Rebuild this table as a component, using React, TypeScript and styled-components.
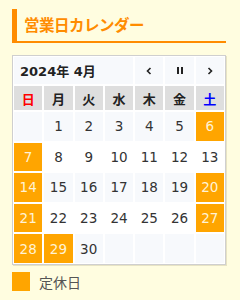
import React from 'react';
import styled, { createGlobalStyle } from 'styled-components';

const GlobalStyle = createGlobalStyle`
  html, body {
    margin: 0;
    padding: 0;
    background: #fffde0;
  }
  body {
    font-family: "DejaVu Sans", "Noto Sans CJK JP", sans-serif;
  }
`;

type DayCell = { day: number | null; closed: boolean };

const YEAR = 2024;
const MONTH = 4;
const CLOSED_DAYS = [6, 7, 14, 20, 21, 27, 28, 29];

const WEEKDAYS = ['日', '月', '火', '水', '木', '金', '土'];

const buildWeeks = (): DayCell[][] => {
  const first = new Date(YEAR, MONTH - 1, 1).getDay();
  const last = new Date(YEAR, MONTH, 0).getDate();
  const cells: DayCell[] = [];
  for (let i = 0; i < first; i++) cells.push({ day: null, closed: false });
  for (let d = 1; d <= last; d++) cells.push({ day: d, closed: CLOSED_DAYS.includes(d) });
  while (cells.length % 7 !== 0) cells.push({ day: null, closed: false });
  const weeks: DayCell[][] = [];
  for (let i = 0; i < cells.length; i += 7) weeks.push(cells.slice(i, i + 7));
  return weeks;
};

const App: React.FC = () => {
  const weeks = buildWeeks();

  return (
    <>
      <GlobalStyle />
      <StyledWidget>
        <StyledTitle>営業日カレンダー</StyledTitle>
        <StyledCalendar>
          <StyledMonth>
            {YEAR}年 {MONTH}月
          </StyledMonth>
          <StyledNav aria-label="prev">
            <svg width="6" height="8" viewBox="0 0 6 8">
              <path d="M4.5 1 L1.5 4 L4.5 7" fill="none" stroke="#222" strokeWidth="1.6" />
            </svg>
          </StyledNav>
          <StyledNav aria-label="today">
            <svg width="6" height="7" viewBox="0 0 6 7">
              <rect x="0" y="0" width="2" height="7" fill="#222" />
              <rect x="4" y="0" width="2" height="7" fill="#222" />
            </svg>
          </StyledNav>
          <StyledNav aria-label="next">
            <svg width="6" height="8" viewBox="0 0 6 8">
              <path d="M1.5 1 L4.5 4 L1.5 7" fill="none" stroke="#222" strokeWidth="1.6" />
            </svg>
          </StyledNav>

          {WEEKDAYS.map((w, i) => (
            <StyledWeekday key={w} $tone={i === 0 ? 'sun' : i === 6 ? 'sat' : 'normal'}>
              {w}
            </StyledWeekday>
          ))}

          {weeks.map((week, wi) =>
            week.map((cell, ci) => (
              <StyledDay key={`${wi}-${ci}`} $closed={cell.closed} $striped={wi % 2 === 0}>
                {cell.day ?? ''}
              </StyledDay>
            ))
          )}
        </StyledCalendar>

        <StyledLegend>
          <StyledSwatch />
          <span>定休日</span>
        </StyledLegend>
      </StyledWidget>
    </>
  );
};

const StyledWidget = styled.div`
  width: 214px;
  padding: 9px 0 0 12px;
`;

const StyledTitle = styled.h2`
  margin: 0;
  height: 34px;
  box-sizing: border-box;
  padding: 3px 0 0 7px;
  border-left: 5px solid #ff8c00;
  border-bottom: 2px solid #ff8c00;
  color: #ff8c00;
  font-family: "Noto Sans CJK JP", sans-serif;
  font-size: 15.5px;
  font-weight: bold;
  line-height: 24px;
  letter-spacing: -0.5px;
`;

const StyledCalendar = styled.div`
  margin-top: 12px;
  display: grid;
  grid-template-columns: repeat(7, 1fr);
  grid-template-rows: 27px 24px repeat(5, 28.6px);
  gap: 2px;
  padding: 1px;
  background: #fff;
  border: 1px solid #cfcfcf;
  box-shadow: 1px 1px 0 rgba(160, 150, 110, 0.25);
`;

const StyledMonth = styled.div`
  grid-column: span 4;
  display: flex;
  align-items: center;
  padding-left: 6px;
  background: #f7f9fc;
  color: #222;
  font-size: 13px;
  font-weight: bold;
`;

const StyledNav = styled.div`
  display: flex;
  align-items: center;
  justify-content: center;
  background: #f7f9fc;
`;

const StyledWeekday = styled.div<{ $tone: 'sun' | 'sat' | 'normal' }>`
  display: flex;
  align-items: center;
  justify-content: center;
  background: #dedede;
  font-family: "Noto Sans CJK JP", sans-serif;
  font-size: 13px;
  font-weight: bold;
  color: ${({ $tone }) => ($tone === 'sun' ? '#ff0000' : $tone === 'sat' ? '#0000ff' : '#222')};
`;

const StyledDay = styled.div<{ $closed: boolean; $striped: boolean }>`
  display: flex;
  align-items: center;
  justify-content: center;
  font-size: 13.5px;
  background: ${({ $closed, $striped }) => ($closed ? '#ffa500' : $striped ? '#f7f9fc' : '#fff')};
  color: ${({ $closed }) => ($closed ? '#fff3d6' : '#333')};
`;

const StyledLegend = styled.div`
  margin-top: 7px;
  display: flex;
  align-items: center;
  gap: 9px;
  font-family: "Noto Sans CJK JP", sans-serif;
  font-size: 14px;
  color: #555;
`;

const StyledSwatch = styled.span`
  width: 18px;
  height: 19px;
  background: #ffa500;
`;

export default App;
